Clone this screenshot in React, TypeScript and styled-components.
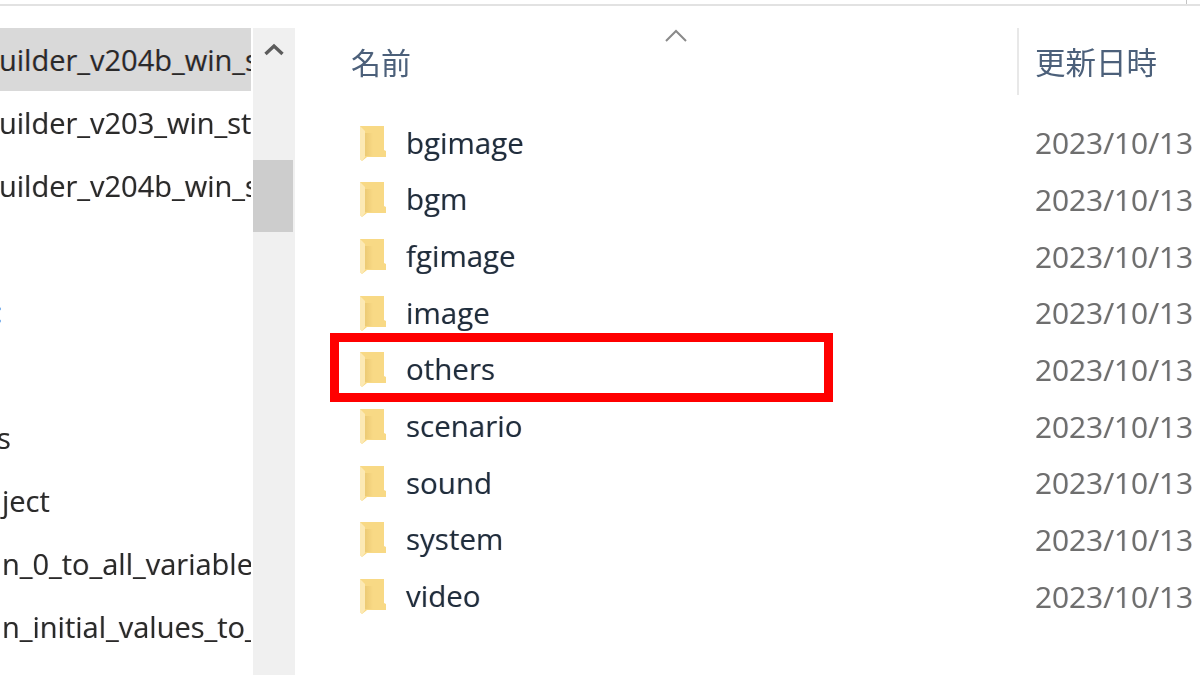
import styled, { createGlobalStyle } from "styled-components";

const TREE_ROWS = [
  { label: "uilder_v204b_win_steam", indent: -1, selected: true },
  { label: "uilder_v203_win_steam", indent: -1 },
  { label: "uilder_v204b_win_steam", indent: -1 },
  { label: "" },
  { label: ":", indent: -5, link: true },
  { label: "" },
  { label: "s", indent: -3 },
  { label: "ject", indent: 2 },
  { label: "n_0_to_all_variables", indent: 2 },
  { label: "n_initial_values_to_all", indent: 2 },
];

const FOLDERS = ["bgimage", "bgm", "fgimage", "image", "others", "scenario", "sound", "system", "video"];

const GlobalStyle = createGlobalStyle`
  html, body {
    margin: 0;
    padding: 0;
    background: #ffffff;
  }
  body {
    width: 1200px;
    height: 675px;
    overflow: hidden;
    font-family: "Open Sans", "Noto Sans CJK JP", sans-serif;
  }
`;

const Screen = styled.div`
  position: relative;
  width: 1200px;
  height: 675px;
  overflow: hidden;
  filter: blur(0.45px);
`;

const TopEdge = styled.div`
  height: 6px;
  box-sizing: border-box;
  border-bottom: 2px solid #e2e2e2;
  display: flex;
  justify-content: flex-end;
  padding-right: 13px;
`;

const EdgeTick = styled.div`
  width: 1px;
  height: 4px;
  background: #c4c4c4;
`;

const Body = styled.div`
  display: flex;
  margin-top: 22px;
  height: 647px;
`;

const Tree = styled.div`
  width: 251px;
  flex: none;
`;

const TreeRow = styled.div<{ $selected?: boolean; $link?: boolean; $indent?: number }>`
  height: 63px;
  line-height: 64px;
  overflow: hidden;
  white-space: nowrap;
  font-size: 29px;
  color: ${(p) => (p.$link ? "#2f86dc" : "#2a2a2a")};
  background: ${(p) => (p.$selected ? "#d9d9d9" : "transparent")};
  text-indent: ${(p) => p.$indent ?? 0}px;
  text-shadow: -0.6px 0 rgba(230, 130, 30, 0.3), 0.6px 0 rgba(30, 110, 230, 0.3);
`;

const ScrollBar = styled.div`
  width: 42px;
  flex: none;
  margin-left: 2px;
  background: #f0f0f0;
  position: relative;
`;

const ScrollArrow = styled.svg`
  display: block;
  position: absolute;
  left: 11px;
  top: 15px;
`;

const ScrollThumb = styled.div`
  position: absolute;
  left: 0;
  top: 132px;
  width: 40px;
  height: 72px;
  background: #cdcdcd;
`;

const Main = styled.div`
  flex: 1;
  margin-left: 5px;
  display: flex;
  flex-direction: column;
`;

const Header = styled.div`
  height: 67px;
  display: flex;
  position: relative;
`;

const NameHeader = styled.div`
  width: 719px;
  box-sizing: border-box;
  padding-left: 51px;
  line-height: 70px;
  font-size: 30px;
  color: #4c607a;
  border-right: 2px solid #e8e8e8;
`;

const DateHeader = styled.div`
  padding-left: 16px;
  line-height: 69px;
  font-size: 30.5px;
  color: #4c607a;
`;

const SortArrow = styled.svg`
  position: absolute;
  left: 365px;
  top: 1px;
`;

const Rows = styled.div`
  margin-top: 20px;
`;

const FileRow = styled.div`
  display: grid;
  grid-template-columns: 26px 649px 1fr;
  height: 56.67px;
  align-items: center;
  padding-left: 60px;
`;

const FolderIcon = styled.svg`
  display: block;
`;

const FileName = styled.span`
  padding: 0 0 2px 20px;
  font-size: 29.5px;
  line-height: 1;
  color: #1f2d3d;
  text-shadow: -0.6px 0 rgba(230, 130, 30, 0.3), 0.6px 0 rgba(30, 110, 230, 0.3);
`;

const FileDate = styled.span`
  font-size: 29.8px;
  line-height: 1;
  color: #6e6e6e;
  white-space: nowrap;
  overflow: hidden;
  text-shadow: -0.6px 0 rgba(230, 130, 30, 0.2), 0.6px 0 rgba(30, 110, 230, 0.2);
`;

const Highlight = styled.div`
  position: absolute;
  left: 330px;
  top: 333px;
  width: 503px;
  height: 69px;
  box-sizing: border-box;
  border: 9px solid #ff0000;
`;

function Folder() {
  return (
    <FolderIcon width="26" height="37" viewBox="0 0 26 37">
      <defs>
        <linearGradient id="folderFold" x1="0" y1="0" x2="1" y2="0">
          <stop offset="0" stopColor="#ecca74" />
          <stop offset="1" stopColor="#f8d985" />
        </linearGradient>
      </defs>
      <path d="M0 1H24V25L26 26V32H7L2 36L0 34Z" fill="#f8d985" />
      <path d="M5 8H13V31H5Z" fill="url(#folderFold)" />
      <path d="M5 6L0 1V34L2 36L5 32Z" fill="#fce9b4" />
    </FolderIcon>
  );
}

export default function App() {
  return (
    <Screen>
      <GlobalStyle />
      <TopEdge>
        <EdgeTick />
      </TopEdge>
      <Body>
        <Tree>
          {TREE_ROWS.map((row, i) => (
            <TreeRow key={i} $selected={row.selected} $link={row.link} $indent={row.indent}>
              {row.label}
            </TreeRow>
          ))}
        </Tree>
        <ScrollBar>
          <ScrollArrow width="20" height="13" viewBox="0 0 20 13">
            <path d="M1.5 11L10 3L18.5 11" fill="none" stroke="#5c5c5c" strokeWidth="3.4" />
          </ScrollArrow>
          <ScrollThumb />
        </ScrollBar>
        <Main>
          <Header>
            <NameHeader>名前</NameHeader>
            <DateHeader>更新日時</DateHeader>
            <SortArrow width="22" height="14" viewBox="0 0 22 14">
              <path d="M1 12L11 2L21 12" fill="none" stroke="#8a8a8a" strokeWidth="2" />
            </SortArrow>
          </Header>
          <Rows>
            {FOLDERS.map((name) => (
              <FileRow key={name}>
                <Folder />
                <FileName>{name}</FileName>
                <FileDate>2023/10/13</FileDate>
              </FileRow>
            ))}
          </Rows>
        </Main>
      </Body>
      <Highlight />
    </Screen>
  );
}
